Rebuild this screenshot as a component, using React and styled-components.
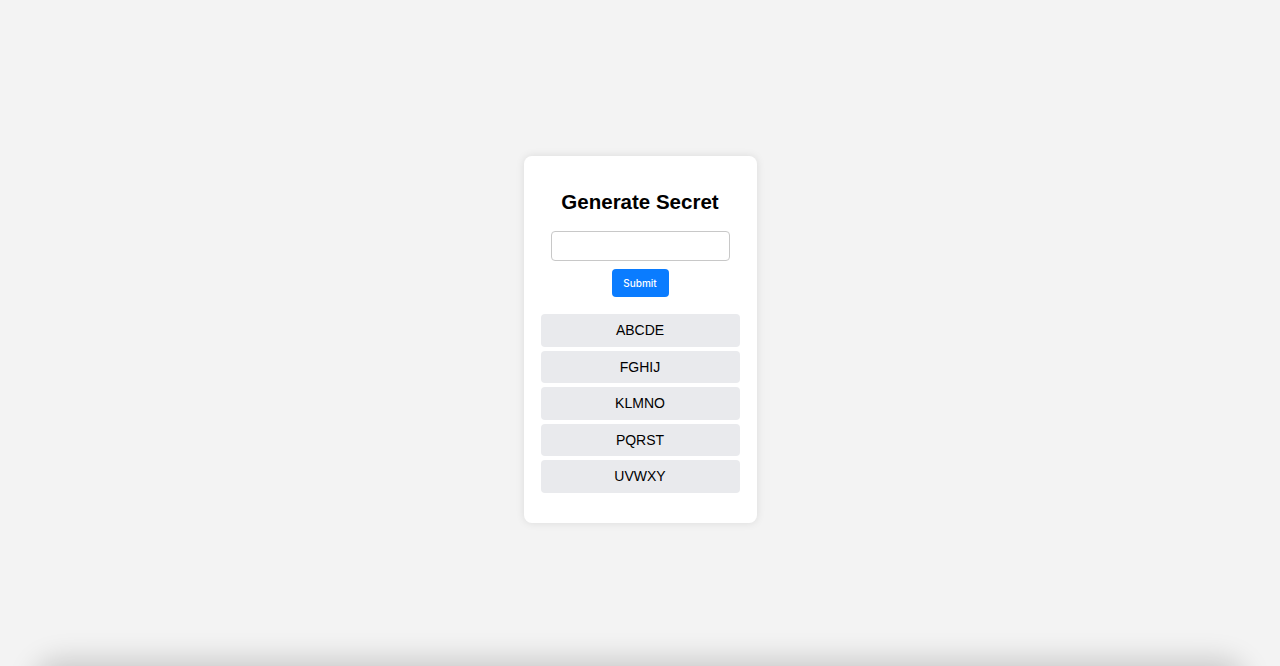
import React, { useState } from 'react'
import styled, { createGlobalStyle } from 'styled-components'

const GlobalStyle = createGlobalStyle`
  html, body {
    margin: 0;
    padding: 0;
    background: #f3f3f3;
    font-family: "Liberation Sans", Arial, Helvetica, sans-serif;
  }
  #root {
    min-height: 666px;
  }
`

const Page = styled.div`
  min-height: 666px;
  display: flex;
  justify-content: center;
  align-items: flex-start;
  padding-top: 156px;
  box-sizing: border-box;
  overflow: hidden;
`

const Card = styled.div`
  width: 233px;
  box-sizing: border-box;
  background: #fff;
  border-radius: 8px;
  box-shadow: 0 0 8px rgba(0, 0, 0, 0.1);
  padding: 32px 17px 30px;
  display: flex;
  flex-direction: column;
  align-items: center;
`

const Title = styled.h2`
  margin: 0 0 15px;
  font-size: 20.5px;
  font-weight: bold;
  color: #000;
  line-height: 28px;
`

const Input = styled.input`
  width: 179px;
  height: 30px;
  box-sizing: border-box;
  border: 1px solid #c8c8c8;
  border-radius: 4px;
  padding: 0 8px;
  font-size: 13px;
  outline: none;
`

const Button = styled.button`
  margin-top: 8px;
  width: 57px;
  height: 28px;
  border: none;
  border-radius: 4px;
  background: #0a7cff;
  color: #fff;
  font-family: "Inter", "Liberation Sans", sans-serif;
  font-size: 10px;
  font-weight: 500;
  cursor: pointer;
`

const List = styled.div`
  margin-top: 17px;
  width: 100%;
  display: flex;
  flex-direction: column;
  gap: 4px;
`

const Item = styled.div`
  height: 32.5px;
  display: flex;
  align-items: center;
  justify-content: center;
  background: #e9eaed;
  border-radius: 4px;
  font-size: 14px;
  color: #000;
`

const BottomShade = styled.div`
  position: fixed;
  left: 40px;
  right: 40px;
  top: 666px;
  height: 40px;
  border-radius: 20px;
  box-shadow: 0 0 28px 6px rgba(0, 0, 0, 0.18);
`

const chunks = ['ABCDE', 'FGHIJ', 'KLMNO', 'PQRST', 'UVWXY']

export default function App() {
  const [value, setValue] = useState('')
  return (
    <>
      <GlobalStyle />
      <Page>
        <Card>
          <Title>Generate Secret</Title>
          <Input value={value} onChange={e => setValue(e.target.value)} />
          <Button>Submit</Button>
          <List>
            {chunks.map(c => (
              <Item key={c}>{c}</Item>
            ))}
          </List>
        </Card>
      </Page>
      <BottomShade />
    </>
  )
}
